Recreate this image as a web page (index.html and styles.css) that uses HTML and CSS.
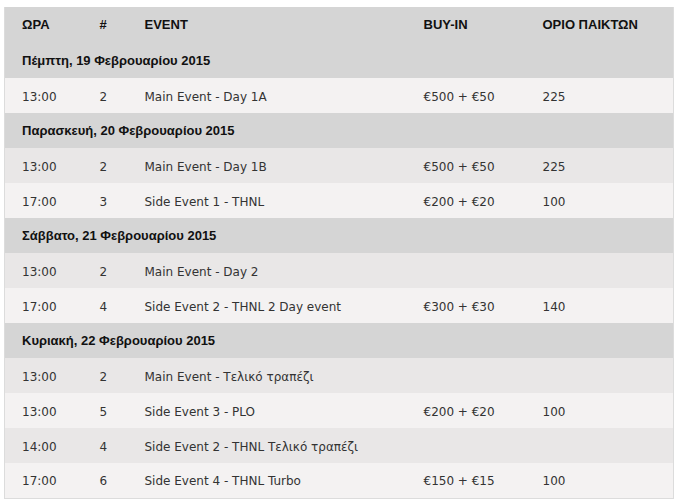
FILE: index.html
```html
<!DOCTYPE html>
<html>
<head>
<meta charset="utf-8">
<link rel="stylesheet" href="styles.css">
</head>
<body>
<table class="schedule">
  <thead>
    <tr class="head">
      <th class="c-time">ΩΡΑ</th>
      <th class="c-num">#</th>
      <th class="c-event">EVENT</th>
      <th class="c-buy">BUY-IN</th>
      <th class="c-limit">ΟΡΙΟ ΠΑΙΚΤΩΝ</th>
    </tr>
  </thead>
  <tbody>
    <tr class="day"><td colspan="5">Πέμπτη, 19 Φεβρουαρίου 2015</td></tr>
    <tr class="light"><td>13:00</td><td>2</td><td>Main Event - Day 1A</td><td>€500 + €50</td><td>225</td></tr>
    <tr class="day"><td colspan="5">Παρασκευή, 20 Φεβρουαρίου 2015</td></tr>
    <tr class="dark"><td>13:00</td><td>2</td><td>Main Event - Day 1B</td><td>€500 + €50</td><td>225</td></tr>
    <tr class="light"><td>17:00</td><td>3</td><td>Side Event 1 - THNL</td><td>€200 + €20</td><td>100</td></tr>
    <tr class="day"><td colspan="5">Σάββατο, 21 Φεβρουαρίου 2015</td></tr>
    <tr class="dark"><td>13:00</td><td>2</td><td>Main Event - Day 2</td><td></td><td></td></tr>
    <tr class="light"><td>17:00</td><td>4</td><td>Side Event 2 - THNL 2 Day event</td><td>€300 + €30</td><td>140</td></tr>
    <tr class="day"><td colspan="5">Κυριακή, 22 Φεβρουαρίου 2015</td></tr>
    <tr class="dark"><td>13:00</td><td>2</td><td>Main Event - Τελικό τραπέζι</td><td></td><td></td></tr>
    <tr class="light"><td>13:00</td><td>5</td><td>Side Event 3 - PLO</td><td>€200 + €20</td><td>100</td></tr>
    <tr class="dark"><td>14:00</td><td>4</td><td>Side Event 2 - THNL Τελικό τραπέζι</td><td></td><td></td></tr>
    <tr class="light"><td>17:00</td><td>6</td><td>Side Event 4 - THNL Turbo</td><td>€150 + €15</td><td>100</td></tr>
  </tbody>
</table>
</body>
</html>
```
FILE: styles.css
```css
html, body {
  margin: 0;
  padding: 0;
  background: #fff;
}
body {
  padding: 7px 0 0 4px;
}
.schedule {
  width: 670px;
  border-collapse: collapse;
  table-layout: fixed;
  border: 1px solid #dcdcdc;
  border-top: none;
  font-family: "DejaVu Sans", Verdana, sans-serif;
  font-size: 12px;
  color: #333;
}
.schedule th,
.schedule td {
  height: 35px;
  padding: 0 0 0 17px;
  text-align: left;
  vertical-align: middle;
  box-sizing: border-box;
  white-space: nowrap;
}
.c-time { width: 78px; }
.c-num { width: 45px; }
.c-event { width: 279px; }
.c-buy { width: 119px; }
.c-limit { width: auto; }
.head th {
  height: 36px;
  padding-bottom: 1px;
  background: #d5d5d5;
  font-family: "Liberation Sans", Arial, sans-serif;
  font-weight: bold;
  font-size: 13px;
  color: #111;
}
.day td {
  background: #d5d5d5;
  font-family: "Liberation Sans", Arial, sans-serif;
  font-weight: bold;
  font-size: 13px;
  color: #111;
}
.light td,
.dark td {
  padding-top: 2px;
}
.light td { background: #f4f2f2; }
.dark td { background: #e9e7e7; }
```
